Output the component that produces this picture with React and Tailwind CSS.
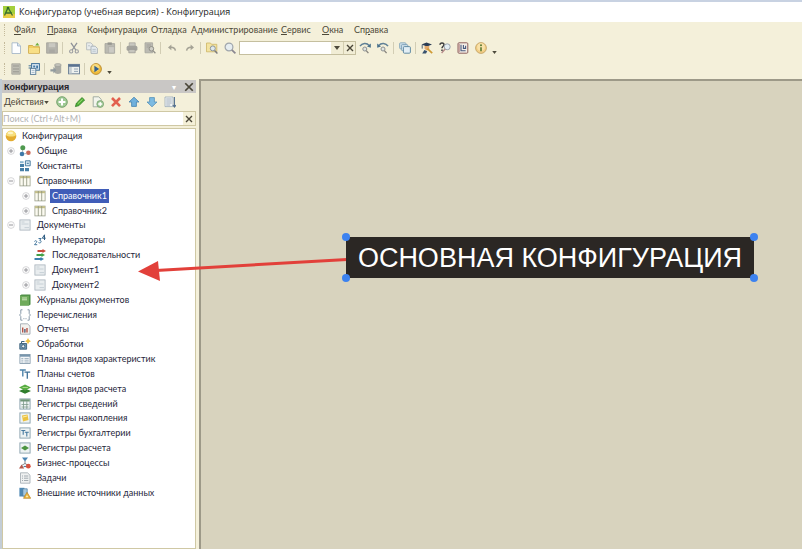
import React from "react";

const Svg = ({ size = "size-3", box = "0 0 12 12", children }) => (
  <svg className={`${size} shrink-0`} viewBox={box} fill="none" aria-hidden="true">
    {children}
  </svg>
);

const page = (fill, stroke) => <path d="M2 .8h5.500L10.500 4v7.500H2z" fill={fill} stroke={stroke} strokeWidth=".8" />;

const toolIcons = {
  new: (
    <>
      {page("#fdfeff", "#9db0c4")}
      <path d="M7.500.8V4h3" stroke="#9db0c4" strokeWidth=".8" fill="#d5e4f2" />
    </>
  ),
  open: (
    <>
      <path d="M.6 3.500h4l1 1.200h5.800v6.600H.6z" fill="#f1cf62" stroke="#c9a13c" strokeWidth=".8" />
      <path d="M1 6h10v5H1z" fill="#f8df86" />
      <path d="M7.200 3.600 9.300.8l2.100 2.800z" fill="#6fae3d" />
    </>
  ),
  save: (
    <>
      <path d="M.6.8h10.800v10.400H.6z" fill="#b4b3ac" stroke="#a1a098" strokeWidth=".8" />
      <path d="M2.800 1.200h6.400v4H2.800z" fill="#c9c8c1" />
      <path d="M3.200 7.500h5.600v3.600H3.200z" fill="#a9a8a2" />
    </>
  ),
  cut: (
    <>
      <path d="M3 .8 7.800 8M9 .8 4.200 8" stroke="#8f9299" strokeWidth="1.300" />
      <circle cx="3.200" cy="9.400" r="1.600" stroke="#9b9ca0" strokeWidth="1.100" />
      <circle cx="8.800" cy="9.400" r="1.600" stroke="#9b9ca0" strokeWidth="1.100" />
    </>
  ),
  copy: (
    <>
      <path d="M.6.8h4.200l2 2v5H.6z" fill="#e9ecec" stroke="#b0b6b8" strokeWidth=".8" />
      <path d="M5 4.200h4.200l2.200 2.200v5H5z" fill="#e3e9ed" stroke="#a1abb2" strokeWidth=".8" />
      <path d="M6.400 7.400h3.400M6.400 9.200h3.400M2 3.800h2" stroke="#a8b4bd" strokeWidth=".7" />
    </>
  ),
  paste: (
    <>
      <path d="M1 1.600h9.600v9.600H1z" fill="#bab9b1" stroke="#a3a29b" strokeWidth=".8" />
      <path d="M3.600.4h4.200v2.400H3.600z" fill="#95958f" />
      <path d="M4.600 4.600h5.800v6.400H4.600z" fill="#cbcac4" stroke="#a9a8a2" strokeWidth=".6" />
    </>
  ),
  print: (
    <>
      <path d="M3.200.8h6v3.600h-6z" fill="#c9c8c0" stroke="#a3a29b" strokeWidth=".7" />
      <rect x=".6" y="3.800" width="10.800" height="5" rx="1.600" fill="#a3a29c" />
      <path d="M2.800 7.400h6.400v3.400H2.800z" fill="#c6c5bd" stroke="#98978f" strokeWidth=".7" />
    </>
  ),
  preview: (
    <>
      <path d="M1 .8h7.600v10H1z" fill="#bcbbb3" stroke="#a5a49d" strokeWidth=".8" />
      <path d="M2.600 3h4.400M2.600 5h3" stroke="#98978f" strokeWidth=".7" />
      <circle cx="7.400" cy="6.800" r="2.300" fill="#cfcec6" stroke="#908f88" />
      <path d="m9 8.600 2.400 2.600" stroke="#908f88" strokeWidth="1.300" />
    </>
  ),
  undo: (
    <>
      <path d="M2 5.400 5.400 2.600v5.600z" fill="#a4a295" />
      <path d="M5 5.200c2.600 0 4 .8 4.400 3.400" stroke="#a4a295" strokeWidth="1.500" />
    </>
  ),
  redo: (
    <>
      <path d="M10 5.400 6.600 2.600v5.600z" fill="#a4a295" />
      <path d="M7 5.200c-2.600 0-4 .8-4.400 3.400" stroke="#a4a295" strokeWidth="1.500" />
    </>
  ),
  findFiles: (
    <>
      <path d="M.5 1h4l1 1.300h5.300v7.500H.5z" fill="#f3e3a0" stroke="#cdb565" strokeWidth=".8" />
      <circle cx="6.800" cy="6.400" r="2.500" fill="#dfe9ec" stroke="#8b949c" />
      <path d="m8.600 8.400 2.800 3" stroke="#7b7b80" strokeWidth="1.400" />
    </>
  ),
  find: (
    <>
      <circle cx="5" cy="5" r="3.900" fill="#e6edf0" stroke="#9fa5ab" strokeWidth="1.200" />
      <path d="m7.800 7.800 3.600 3.600" stroke="#8a8790" strokeWidth="1.700" />
    </>
  ),
  findNext: (
    <>
      <path d="M1 4.200C3 .8 8 .6 10 3.400" stroke="#5f8096" strokeWidth="1.500" />
      <path d="M11.800 1.400v4.400L8 4.600z" fill="#48708c" />
      <circle cx="5.800" cy="7" r="2" fill="#dfe4e2" stroke="#8d9192" />
      <path d="m7.200 8.600 2.200 2.600" stroke="#85827c" strokeWidth="1.300" />
    </>
  ),
  findPrev: (
    <>
      <path d="M11 4.200C9 .8 4 .6 2 3.400" stroke="#5f8096" strokeWidth="1.500" />
      <path d="M.2 1.400v4.400L4 4.600z" fill="#48708c" />
      <circle cx="6" cy="7" r="2" fill="#dfe4e2" stroke="#8d9192" />
      <path d="m7.400 8.600 2.200 2.600" stroke="#85827c" strokeWidth="1.300" />
    </>
  ),
  windows: (
    <>
      <rect x=".6" y=".8" width="6.400" height="6" rx="1" fill="#cfe0ea" stroke="#7c9fb5" strokeWidth=".8" />
      <rect x="2.400" y="2.600" width="6.400" height="6" rx="1" fill="#cfe0ea" stroke="#6f96ae" strokeWidth=".8" />
      <rect x="4.400" y="4.600" width="7" height="6.600" rx="1" fill="#e2eef4" stroke="#55819c" strokeWidth=".9" />
    </>
  ),
  syntax: (
    <>
      <path d="m.5 2.600 5-2.200 5.500 2.200-5 2z" fill="#2b3d55" />
      <path d="M3.600 4h4.600v3.400L6 8.400 3.600 7z" fill="#e3a96e" />
      <path d="M1.200 11.400 3.400 8l2.800 1.200L5 11.400z" fill="#37516e" />
      <path d="m6.400 6.600 4.800 4.600" stroke="#cf9a34" strokeWidth="1.700" />
      <path d="M1.200 3v3.600" stroke="#2b3d55" strokeWidth=".8" />
    </>
  ),
  helpSearch: (
    <>
      <path d="M1 2.800C1 .4 5 .4 5 2.800 5 4.200 3 4.400 3 6.200M3 7.400v1.600" stroke="#3c3c3e" strokeWidth="1.500" />
      <circle cx="8.200" cy="4.800" r="3" fill="#e4edf2" stroke="#9aa3ad" />
      <path d="m6.200 7-3.600 4" stroke="#b58a8a" strokeWidth="1.400" />
    </>
  ),
  template: (
    <>
      <rect x="1" y=".8" width="9.800" height="10.400" rx="1" fill="#f4eee6" stroke="#8d5f5c" />
      <path d="M4 2.800v6h4.600M6.400 3v3.400h2.200V3.800" stroke="#475a7e" strokeWidth="1.100" />
      <path d="M2.200 2v8" stroke="#a86c68" strokeWidth=".8" />
    </>
  ),
  info: (
    <>
      <circle cx="6" cy="6" r="5.400" fill="#f3cf86" stroke="#bd9a5c" strokeWidth=".8" />
      <circle cx="6" cy="5" r="3.800" fill="#f9e2a9" />
      <path d="M6 5.200v4" stroke="#5a7a33" strokeWidth="1.600" />
      <circle cx="6" cy="3.200" r="1" fill="#5a7a33" />
    </>
  ),
  module: (
    <>
      <path d="M1.800.8h8.400v10.400H1.800z" fill="#bfbeb4" stroke="#a3a299" strokeWidth=".8" />
      <path d="M3 3h6M3 6h6M3 8.800h6" stroke="#999890" />
    </>
  ),
  configTree: (
    <>
      <rect x="3.600" y=".6" width="7.800" height="6.600" fill="#dce9f3" stroke="#3e6f99" />
      <path d="M5.200 2.400h2v2h-2zM8.200 2.400h1.800v3H8.200z" fill="#4479a5" />
      <path d="M.6 2.800h3M.6 5h2.600" stroke="#467297" />
      <rect x="2.400" y="5.400" width="5.400" height="6" fill="#f2f6f8" stroke="#587c97" strokeWidth=".9" />
      <path d="M3.600 7.400h3M3.600 9.400h3" stroke="#8ba5b8" strokeWidth=".7" />
    </>
  ),
  database: (
    <>
      <path d="M4.600 1.800v7.800c0 1.800 6.600 1.800 6.600 0V1.800z" fill="#a9aaa4" />
      <ellipse cx="7.900" cy="2" rx="3.300" ry="1.400" fill="#c6c6be" stroke="#999a94" strokeWidth=".6" />
      <path d="M.4 6.200h3V4l3 3.300-3 3.300V8.400h-3z" fill="#929b9f" />
    </>
  ),
  table: (
    <>
      <rect x=".5" y="1.400" width="11" height="9.400" fill="#eef1ef" stroke="#74879a" />
      <path d="M.5 1.400h11v2.400H.5z" fill="#5a7290" />
      <path d="M1 4h2.800v6.400H1z" fill="#c6cfd4" />
      <path d="M6 6h4M6 8.400h4" stroke="#8096a8" strokeWidth=".8" />
    </>
  ),
  run: (
    <>
      <circle cx="6" cy="6" r="5.400" fill="#f0bd3d" stroke="#b8892b" strokeWidth=".9" />
      <circle cx="5.600" cy="4.800" r="3.800" fill="#f9db7e" />
      <path d="M4.400 2.800 9.200 6l-4.800 3.200z" fill="#35618d" />
    </>
  ),
  add: (
    <>
      <circle cx="6" cy="6" r="5.300" fill="#9fca94" stroke="#6f9c68" strokeWidth=".9" />
      <path d="M6 2.600v6.800M2.600 6h6.800" stroke="#fff" strokeWidth="2" />
    </>
  ),
  edit: (
    <>
      <path d="M1.400 10.600 2.400 7.200 8 1.600l2.600 2.400L5 9.600z" fill="#4fae35" stroke="#2d7c26" strokeWidth=".8" />
      <path d="m3.800 7.800 4.800-4.600" stroke="#a5e07f" />
    </>
  ),
  addCopy: (
    <>
      <path d="M1.200.8h5.600l2.400 2.600v7.400h-8z" fill="#f2f4ec" stroke="#9aa59c" strokeWidth=".9" />
      <circle cx="8.200" cy="8" r="3.400" fill="#a3c99a" stroke="#6e9c68" strokeWidth=".7" />
      <path d="M8.200 6v4M6.200 8h4" stroke="#fff" strokeWidth="1.300" />
    </>
  ),
  remove: <path d="m2 2 8 8.200M10 2 2 10.200" stroke="#e2604f" strokeWidth="2.600" />,
  up: <path d="M6 1.200 11 6H8.400v4.400H3.600V6H1z" fill="#6fb0dc" stroke="#4482ae" strokeWidth=".8" />,
  down: <path d="M6 10.800 1 6h2.600V1.600h4.800V6H11z" fill="#7dbbe2" stroke="#5590b8" strokeWidth=".8" />,
  sort: (
    <>
      <path d="M1 1h8v9.600H1z" fill="#f3f6f6" stroke="#99a9b8" strokeWidth=".8" />
      <path d="M2.200 3h5.600M2.200 5h5.600M2.200 7h5.600M2.200 9h4" stroke="#8c9dae" strokeWidth=".8" />
      <path d="M10.400 1v9.600M8.800 9l1.600 2L12 9" stroke="#526f8e" strokeWidth="1.100" />
    </>
  ),
};

const grid = (
  <>
    <rect x=".9" y="1.100" width="10.200" height="9.800" fill="#fbfaf0" stroke="#9ba08c" strokeWidth=".8" />
    <path d="M1 1.200h10v2H1z" fill="#c4bf88" />
    <path d="M4.300 1v10M7.700 1v10" stroke="#8b927c" strokeWidth=".8" />
  </>
);
const doc = (
  <>
    <rect x=".9" y=".9" width="10.200" height="10.200" fill="#e9edef" stroke="#a7b2ba" strokeWidth=".8" />
    <path d="M2.500 3h3M2.500 5h7M5.500 8.600H10" stroke="#c3cdd4" strokeWidth=".9" />
  </>
);
const register = (
  <rect x=".9" y=".9" width="10.200" height="10.200" fill="#eef3f3" stroke="#88a0ac" strokeWidth=".9" />
);

const treeIcons = {
  root: (
    <>
      <circle cx="6" cy="6" r="5.300" fill="#e3ac30" />
      <path d="M1 5a5 4.400 0 0 1 10 0c-1.600 2-8.400 2-10 0z" fill="#f7de7c" />
      <ellipse cx="5.400" cy="3" rx="2.800" ry="1.300" fill="#fdf4c4" />
    </>
  ),
  common: (
    <>
      <circle cx="3.800" cy="2.800" r="2.500" fill="#4f9a50" />
      <circle cx="3" cy="9" r="2.300" fill="#3e79a8" />
      <circle cx="9.400" cy="7.800" r="2.300" fill="#c96a5a" />
      <path d="M3.600 5v2M5.400 8.600h2" stroke="#8a96a0" strokeWidth=".7" />
    </>
  ),
  constants: (
    <>
      <path d="M1 4h4v3H1zM1 8h4v3.200H1zM6 8h4v3.200H6z" fill="#477fa6" />
      <path d="M6.400.8h4.800v5H6.400z" fill="#d9eaf3" stroke="#3f7499" strokeWidth=".9" />
      <path d="M1 1.200h3.600v2H1z" fill="#8db6cf" />
      <path d="M7.800 3.300h2" stroke="#3f7499" />
    </>
  ),
  grid,
  doc,
  numbers: (
    <>
      <path d="M.5 7.500c.4-1.200 2.500-1 2.200.4-.2.900-1.600 1.600-2.200 2.800h2.700" stroke="#44779e" />
      <path d="M4.500 4.500h2.600L5.700 6.300c1.900 0 1.900 2.700-.2 2.600l-1-.3" stroke="#44779e" />
      <path d="M10.500 6V.8L8.300 4.200h3.400" stroke="#315f85" />
    </>
  ),
  sequence: (
    <>
      <path d="M3.500 1h5V0L12 2 8.500 4V3h-5z" fill="#c94a3d" />
      <path d="M2.500 5h5V4L11 6 7.500 8V7h-5z" fill="#43a047" />
      <path d="M.5 9h6V8L10 10l-3.500 2v-1h-6z" fill="#3d80ad" />
    </>
  ),
  journal: (
    <>
      <path d="M1 1.500 2.500.5h9v10l-1.500 1H1z" fill="#4c8d45" />
      <path d="M1 1.800h9v9.700H1z" fill="#6fab5b" />
      <path d="M3 4h5M3 5.800h5" stroke="#dcecc9" strokeWidth=".9" />
    </>
  ),
  enums: (
    <>
      <path d="M3.500.8H1.800v3.700L.6 6l1.200 1.500v3.700h1.700M8.500.8h1.700v3.700L11.400 6l-1.200 1.500v3.700H8.500" stroke="#7d8ea0" strokeWidth=".9" />
      <path d="M4.400 9.700h1M6.500 9.700h1" stroke="#7d8ea0" strokeWidth=".9" />
    </>
  ),
  report: (
    <>
      <path d="M1.500.8h7l2.500 2.400v8H1.500z" fill="#f3f2ef" stroke="#97a1a9" strokeWidth=".8" />
      <path d="M3.700 9.500V4.600M5.800 9.500V6M8 9.500V5" stroke="#b55448" strokeWidth="1.400" />
      <path d="M5.800 9.500V6" stroke="#5b80a0" strokeWidth="1.300" />
    </>
  ),
  processing: (
    <>
      <path d="M.8 5.500h6.800v5.700H.8z" fill="#6d94af" stroke="#3d617c" strokeWidth=".9" />
      <circle cx="4.200" cy="8.300" r="1.600" fill="#e6eff4" stroke="#34546c" strokeWidth=".8" />
      <path d="M2.500 5.500v-2h3" stroke="#3d617c" />
      <path d="m9 .1 1.100 2L12 3.200l-1.900 1.100-1.100 2-1.100-2L6 3.200l1.900-1.100z" fill="#efc244" />
    </>
  ),
  characteristics: (
    <>
      <rect x=".9" y="1.500" width="10.200" height="9" fill="#f3f6f8" stroke="#7c93a5" strokeWidth=".8" />
      <path d="M1 1.500h10v2.200H1z" fill="#7795ac" />
      <path d="M2.300 5.500h2M2.300 7.200h2M2.300 9h2M5.500 5.500h4.200M5.500 7.200h4.200M5.500 9h4.200" stroke="#93a8b8" strokeWidth=".8" />
    </>
  ),
  accounts: (
    <>
      <path d="M.8 2h6M3.800 2v6.500" stroke="#4e84aa" strokeWidth="1.400" />
      <path d="M5.500 4.200h5.700M8.300 4.200v6.600" stroke="#3f7198" strokeWidth="1.300" />
    </>
  ),
  calcTypes: (
    <>
      <path d="M0 8 6 5.500 12 8l-6 2.800z" fill="#2f7d2c" />
      <path d="M0 4.500 6 1.500l6 3-6 3z" fill="#58ad43" />
      <path d="M3.500 4.500H9" stroke="#bfe39c" strokeWidth=".8" />
    </>
  ),
  infoReg: (
    <>
      {register}
      <path d="M1.300 1.300h9.400v2.200H1.300z" fill="#6f9577" />
      <path d="M4.500 3v8M7.800 3v8M2.500 6.500h7M2.500 9h7" stroke="#7d9b8c" strokeWidth=".8" />
    </>
  ),
  accumReg: (
    <>
      {register}
      <path d="M3 3.500 8.500 2.500l1 5.500-5.500 1.500z" fill="#ecc23f" />
      <path d="m4 5 4-1" stroke="#fbeeb0" />
    </>
  ),
  accountReg: (
    <>
      {register}
      <path d="M2.300 3.500h4M4.200 3.500v4.300M5.800 5.200h4M7.800 5.200v4.300" stroke="#45799f" strokeWidth="1.100" />
    </>
  ),
  calcReg: (
    <>
      {register}
      <path d="M2 6 6 3.500 10 6 6 8.500z" fill="#4c9440" />
    </>
  ),
  business: (
    <>
      <path d="M3 .6h6L6 4.500z" fill="#4c86b3" />
      <path d="M6 4v3M2.500 8.500 6 6.500l3.500 2" stroke="#7b8288" strokeWidth=".9" />
      <path d="M0 11.400 2.600 7.500l2.600 3.900z" fill="#b4584b" />
      <path d="M4.600 9.500h2.600" stroke="#4d7ba0" strokeWidth="1.200" />
      <circle cx="9.300" cy="9.200" r="2.400" fill="#d6513f" />
    </>
  ),
  tasks: (
    <>
      <path d="M1.500.8h7L11 3.200v8H1.500z" fill="#eff1f1" stroke="#a0a8ae" strokeWidth=".8" />
      <path d="M3 4h1M5 4h4.300M3 6.200h1M5 6.200h4.300M3 8.500h1M5 8.500h4.300" stroke="#8d989f" strokeWidth=".8" />
    </>
  ),
  external: (
    <>
      <path d="M.4.800h5V9.500h-5z" fill="#4d88b4" />
      <path d="M3.800 1.800h4.400V9H3.800z" fill="#a6c8de" stroke="#467a9f" strokeWidth=".7" />
      <path d="m8 5.300 3.700 6H4.500z" fill="#eab63c" stroke="#b98426" strokeWidth=".7" />
      <circle cx="8" cy="9.400" r=".9" fill="#fff2c2" />
    </>
  ),
};

const menu = [
  ["", "Ф", "айл", "w-[33px]"],
  ["", "П", "равка", "w-10"],
  ["Конфигурация", "", "", "w-16"],
  ["Отладка", "", "", "w-10"],
  ["Администрирование", "", "", "w-[90px]"],
  ["", "С", "ервис", "w-[41px]"],
  ["", "О", "кна", "w-8"],
  ["Сп", "р", "авка", "w-10"],
];

const tree = [
  [1, "common", "Общие", "+"],
  [1, "constants", "Константы"],
  [1, "grid", "Справочники", "-"],
  [2, "grid", "Справочник1", "+", true],
  [2, "grid", "Справочник2", "+"],
  [1, "doc", "Документы", "-"],
  [2, "numbers", "Нумераторы"],
  [2, "sequence", "Последовательности"],
  [2, "doc", "Документ1", "+"],
  [2, "doc", "Документ2", "+"],
  [1, "journal", "Журналы документов"],
  [1, "enums", "Перечисления"],
  [1, "report", "Отчеты"],
  [1, "processing", "Обработки"],
  [1, "characteristics", "Планы видов характеристик"],
  [1, "accounts", "Планы счетов"],
  [1, "calcTypes", "Планы видов расчета"],
  [1, "infoReg", "Регистры сведений"],
  [1, "accumReg", "Регистры накопления"],
  [1, "accountReg", "Регистры бухгалтерии"],
  [1, "calcReg", "Регистры расчета"],
  [1, "business", "Бизнес-процессы"],
  [1, "tasks", "Задачи"],
  [1, "external", "Внешние источники данных"],
];

const Tool = ({ icon, label }) => (
  <button type="button" aria-label={label} className="flex h-5 w-[18px] shrink-0 items-center justify-center">
    <Svg>{toolIcons[icon]}</Svg>
  </button>
);
const Sep = () => <span className="mr-0.5 ml-px h-3 w-px shrink-0 bg-[#d2cdb4]" />;
const Grip = () => <span className="mr-0.5 ml-1 h-3 w-px shrink-0 border-l border-dotted border-[#c3b99a]" />;
const Caret = ({ size = "h-1 w-1.5" }) => (
  <Svg size={size} box="0 0 6 4">
    <path d="M0 0h6L3 4z" fill="#4d4a3c" />
  </Svg>
);
const Cross = ({ size = "size-2" }) => (
  <Svg size={size} box="0 0 8 8">
    <path d="m1 1 6 6M7 1 1 7" stroke="#4a4638" strokeWidth="1.400" />
  </Svg>
);
const Expander = ({ sign }) => (
  <Svg size="size-2" box="0 0 8 8">
    <circle cx="4" cy="4" r="3.400" fill="#fbfbfb" stroke="#cfcfd2" strokeWidth=".8" />
    <path d={sign === "+" ? "M2 4h4M4 2v4" : "M2 4h4"} stroke="#8c8c92" strokeWidth=".9" />
  </Svg>
);

function TreeRow({ level, icon, label, sign, selected }) {
  return (
    <li
      role="treeitem"
      aria-level={level + 1}
      aria-selected={!!selected}
      aria-expanded={sign ? sign === "-" : undefined}
      className={`flex min-h-0 flex-1 items-center ${level === 2 ? "pl-4" : "pl-px"}`}
    >
      <span className="flex w-3.5 shrink-0 justify-center">{sign && <Expander sign={sign} />}</span>
      <span className="mr-1 ml-px shrink-0">
        <Svg>{treeIcons[icon]}</Svg>
      </span>
      <span className={`px-0.5 leading-[14px] whitespace-nowrap ${selected ? "bg-[#405db8] text-white" : ""}`}>
        {label}
      </span>
    </li>
  );
}

export default function App() {
  return (
    <div className="relative flex min-h-screen flex-col bg-[#f4f0da] font-[Lato,'Liberation_Sans',Arial,sans-serif] text-[9px] leading-3 text-[#26263a]">
      <header className="border-t-2 border-[#c8d2e2]">
        <div className="flex h-5 items-center gap-1 bg-white pl-[3px]">
          <Svg size="size-3">
            <path d="M0 0h12v12H0z" fill="#a4cf3c" />
            <path d="M0 8.500c4-2.500 7-2.500 12 0V12H0z" fill="#e7cd45" />
            <path d="M5 1.500 1.500 9.500M5 1.500l4.500 8M3 7h6" stroke="#39702e" strokeWidth="1.300" />
            <circle cx="5" cy="2" r="1.300" fill="#2f6a2c" />
          </Svg>
          <h1 className="font-['Open_Sans','Noto_Sans',sans-serif] text-[9px] whitespace-nowrap text-[#1c1c1c]">
            Конфигуратор (учебная версия) - Конфигурация
          </h1>
        </div>
      </header>

      <nav aria-label="Главное меню" className="flex h-4 items-center text-[#4d4939]">
        <Grip />
        <div className="flex pl-[7px]">
          {menu.map(([before, key, after, width]) => (
            <button key={before + key + after} type="button" className={`${width} shrink-0 text-left whitespace-nowrap`}>
              {before}
              <span className="underline">{key}</span>
              {after}
            </button>
          ))}
        </div>
      </nav>

      <div role="toolbar" aria-label="Стандартная" className="flex h-5 items-center">
        <Grip />
        <Tool icon="new" label="Новый" />
        <Tool icon="open" label="Открыть" />
        <Tool icon="save" label="Сохранить" />
        <Sep />
        <Tool icon="cut" label="Вырезать" />
        <Tool icon="copy" label="Копировать" />
        <Tool icon="paste" label="Вставить" />
        <Sep />
        <Tool icon="print" label="Печать" />
        <Tool icon="preview" label="Просмотр" />
        <Sep />
        <Tool icon="undo" label="Отменить" />
        <Tool icon="redo" label="Вернуть" />
        <Sep />
        <Tool icon="findFiles" label="Глобальный поиск" />
        <Tool icon="find" label="Поиск" />
        <div className="flex h-3.5 w-[117px] shrink-0 border border-[#c5bf9f] bg-white">
          <input aria-label="Строка поиска" className="w-0 min-w-0 flex-1 bg-white px-1 outline-none" />
          <button type="button" aria-label="История поиска" className="flex w-3 items-center justify-center bg-[#f1edd5]">
            <Caret />
          </button>
          <button
            type="button"
            aria-label="Очистить"
            className="flex w-3 items-center justify-center border-l border-[#d4ceb0] bg-[#f1edd5]"
          >
            <Cross />
          </button>
        </div>
        <Tool icon="findNext" label="Найти следующий" />
        <Tool icon="findPrev" label="Найти предыдущий" />
        <Sep />
        <Tool icon="windows" label="Окна" />
        <Sep />
        <Tool icon="syntax" label="Синтакс-помощник" />
        <Tool icon="helpSearch" label="Поиск в справке" />
        <Tool icon="template" label="Шаблоны" />
        <Tool icon="info" label="О программе" />
        <span className="mt-2 ml-0.5">
          <Caret size="h-[3px] w-[5px]" />
        </span>
      </div>

      <div role="toolbar" aria-label="Конфигурация" className="flex h-[21px] items-center">
        <Grip />
        <Tool icon="module" label="Модуль" />
        <Tool icon="configTree" label="Открыть конфигурацию" />
        <Sep />
        <Tool icon="database" label="Обновить базу данных" />
        <Tool icon="table" label="Таблица" />
        <Sep />
        <Tool icon="run" label="Начать отладку" />
        <span className="mt-2 ml-0.5">
          <Caret size="h-[3px] w-[5px]" />
        </span>
      </div>

      <div className="flex flex-1">
        <aside className="flex w-[196px] shrink-0 flex-col border-l-2 border-[#c3cdd6]">
          <div className="mt-px flex h-[13px] items-center bg-[#c9c7c5] pr-0.5 text-[#24232a]">
            <h2 className="flex-1 pl-0.5 font-['Liberation_Sans',Arial,sans-serif] font-bold">Конфигурация</h2>
            <span className="mr-2 text-[8px] text-white" aria-hidden="true">▾</span>
            <button type="button" aria-label="Закрыть панель">
              <Cross size="size-2.5" />
            </button>
          </div>
          <div className="flex h-[18px] items-center">
            <button type="button" className="mr-0.5 flex w-[49px] items-center justify-between pr-1 pl-0.5 text-[#4d4939]">
              Действия
              <Caret size="h-[3px] w-[5px]" />
            </button>
            <Tool icon="add" label="Добавить" />
            <Tool icon="edit" label="Изменить" />
            <Tool icon="addCopy" label="Скопировать" />
            <Tool icon="remove" label="Удалить" />
            <Tool icon="up" label="Вверх" />
            <Tool icon="down" label="Вниз" />
            <Tool icon="sort" label="Упорядочить" />
          </div>
          <div className="flex h-[15px] border border-[#cfc8a4] bg-white">
            <input
              aria-label="Поиск"
              placeholder="Поиск (Ctrl+Alt+M)"
              className="min-w-0 flex-1 bg-white outline-none placeholder:text-[#b3b3b3]"
            />
            <button type="button" aria-label="Очистить поиск" className="flex w-3 items-center justify-center bg-[#f4f0d8]">
              <Cross />
            </button>
          </div>
          <div className="mt-0.5 flex-1 border border-[#cfc8a4] bg-white">
            <ul role="tree" aria-label="Конфигурация" className="flex h-[371px] flex-col">
              <li role="treeitem" aria-level={1} aria-selected={false} className="flex min-h-0 flex-1 items-center gap-[5px] pl-0.5">
                <Svg>{treeIcons.root}</Svg>
                Конфигурация
              </li>
              {tree.map(([level, icon, label, sign, selected]) => (
                <TreeRow key={label} level={level} icon={icon} label={label} sign={sign} selected={selected} />
              ))}
            </ul>
          </div>
        </aside>
        <main className="ml-[3px] flex-1 border-t-2 border-l-2 border-[#9d9988] bg-[#d8d3be]" />
      </div>

      <svg className="absolute top-[255px] left-[136px] h-8 w-[212px]" viewBox="0 0 212 32" aria-hidden="true">
        <path d="M20 15.500 211 4.500" stroke="#e2403a" strokeWidth="3" />
        <path d="M2 16.500 22 6l2 20z" fill="#e2403a" />
      </svg>
      <div className="absolute top-[237px] left-[346px] flex h-[41px] w-[408px] items-center justify-center bg-[#2b2724] font-['Liberation_Sans',sans-serif] text-[27px] leading-8 whitespace-nowrap text-white">
        ОСНОВНАЯ КОНФИГУРАЦИЯ
        <span className="absolute -top-1 -left-1 size-2 rounded-full bg-[#3c82f0]" />
        <span className="absolute -top-1 -right-1 size-2 rounded-full bg-[#3c82f0]" />
        <span className="absolute -bottom-1 -left-1 size-2 rounded-full bg-[#3c82f0]" />
        <span className="absolute -right-1 -bottom-1 size-2 rounded-full bg-[#3c82f0]" />
      </div>
    </div>
  );
}
